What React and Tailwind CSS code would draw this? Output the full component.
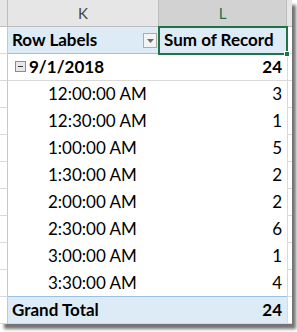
import React from "react";

const rows = [
  ["12:00:00 AM", 3],
  ["12:30:00 AM", 1],
  ["1:00:00 AM", 5],
  ["1:30:00 AM", 2],
  ["2:00:00 AM", 2],
  ["2:30:00 AM", 6],
  ["3:00:00 AM", 1],
  ["3:30:00 AM", 4],
];

function Row({ bg = "bg-white", bottom = "border-b-[#d9d9d9]", children, right, bold }) {
  return (
    <div className="flex h-[27px]">
      <div className="w-[8px] shrink-0 border-r border-b border-r-[#c8c8c8] border-b-[#d9d9d9] bg-white" />
      <div
        className={`flex w-[279px] shrink-0 items-end border-b pb-[3px] leading-[20px] text-black ${bg} ${bottom} ${bold ? "font-bold" : ""}`}
      >
        <div className="flex w-[151px] shrink-0 items-center">{children}</div>
        <div className="w-[123px] shrink-0 text-right">{right}</div>
      </div>
      <div className="w-[5px] shrink-0 border-l border-b border-l-[#d9d9d9] border-b-[#d9d9d9] bg-white" />
    </div>
  );
}

export default function App() {
  return (
    <div className="h-[332px] w-[297px] bg-white" style={{ fontFamily: "Lato, 'Liberation Sans', sans-serif" }}>
      <div className="relative w-[292px] bg-white text-[17px] shadow-[4px_5px_3px_rgba(0,0,0,0.55)]">
        {/* column headers */}
        <div className="flex h-[27px] text-[15px]">
          <div className="w-[8px] shrink-0 border-r border-b border-[#bdbdbd] bg-[#e6e6e6]" />
          <div className="flex w-[151px] shrink-0 items-end justify-center border-r border-b border-[#bdbdbd] bg-[#e6e6e6] pb-[4px] leading-[18px] text-[#444]">
            K
          </div>
          <div className="flex w-[128px] shrink-0 items-end justify-center border-r border-b border-r-[#bdbdbd] border-b-[#217346] bg-[#d2d2d2] pb-[4px] leading-[18px] text-[#217346]">
            L
          </div>
          <div className="w-[5px] shrink-0 border-b border-[#bdbdbd] bg-[#e6e6e6]" />
        </div>

        {/* pivot header */}
        <Row bg="bg-[#ddebf7]" bottom="border-b-[#9bc2e6]" bold right={<span className="block pl-[5px] text-left">Sum of Record</span>}>
          <span className="pl-[4px]">Row Labels</span>
          <span className="ml-auto mr-[2px] mb-[-1px] flex h-[15px] w-[14px] items-center justify-center border border-[#ababab] bg-[#f3f3f3]">
            <svg width="7" height="4" viewBox="0 0 7 4">
              <path d="M0 0h7L3.5 4z" fill="#6b6b6b" />
            </svg>
          </span>
        </Row>

        <Row bold right="24">
          <span className="mb-[2px] ml-[7px] mr-[3px] flex h-[11px] w-[11px] items-center justify-center border border-[#8c8c8c] bg-[#e8e8e8]">
            <span className="h-[1px] w-[5px] bg-[#333]" />
          </span>
          <span>9/1/2018</span>
        </Row>

        {rows.map(([t, n]) => (
          <Row key={t} right={n} bottom={t === "3:30:00 AM" ? "border-b-[#9bc2e6]" : "border-b-transparent"}>
            <span className="pl-[40px]">{t}</span>
          </Row>
        ))}

        <Row bg="bg-[#ddebf7]" bottom="border-b-[#d9d9d9]" bold right="24">
          <span className="pl-[4px]">Grand Total</span>
        </Row>

        {/* active cell outline */}
        <div className="absolute left-[158px] top-[26px] h-[29px] w-[130px] border-2 border-[#217346]" />
        <div className="absolute left-[284px] top-[51px] h-[6px] w-[6px] border border-white bg-[#217346]" />
      </div>
    </div>
  );
}
